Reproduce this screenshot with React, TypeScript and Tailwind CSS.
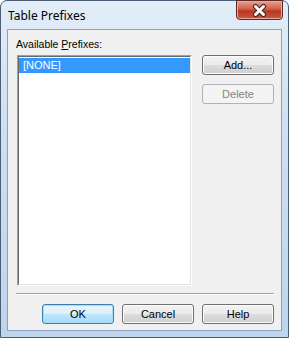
import React from 'react';

const font = { fontFamily: '"Liberation Sans", Arial, sans-serif' };

interface BtnProps {
  label: React.ReactNode;
  primary?: boolean;
  disabled?: boolean;
}

const DialogButton: React.FC<BtnProps> = ({ label, primary, disabled }) => {
  let cls =
    'w-[72px] h-[20px] rounded-[3px] border flex items-center justify-center text-[11px] leading-none ';
  if (disabled) {
    cls += 'border-[#adb2b5] bg-[#f4f4f4] text-[#838383]';
  } else if (primary) {
    cls +=
      'border-[#3c7fb1] bg-[linear-gradient(#eaf6fd_0%,#d9f0fc_50%,#bee6fd_50%,#a7d9f5_100%)] text-black shadow-[inset_0_0_0_1px_#a6dcf7]';
  } else {
    cls +=
      'border-[#707070] bg-[linear-gradient(#f2f2f2_0%,#ebebeb_50%,#dddddd_50%,#cfcfcf_100%)] text-black shadow-[inset_0_0_0_1px_#fcfcfc]';
  }
  return (
    <div className={cls} style={font}>
      {label}
    </div>
  );
};

const CloseGlyph = () => (
  <svg width="15" height="13" viewBox="0 0 15 13">
    <path d="M3.5 2.5 L11.5 10.5 M11.5 2.5 L3.5 10.5" stroke="#4a2020" strokeWidth="5" strokeLinecap="round" />
    <path d="M3.5 2.5 L11.5 10.5 M11.5 2.5 L3.5 10.5" stroke="#ffffff" strokeWidth="3" strokeLinecap="round" />
  </svg>
);

export default function App() {
  return (
    <div className="w-[289px] h-[338px] bg-white">
      <div className="relative w-full h-full flex flex-col border border-[#4c5f77] rounded-t-[7px] bg-[linear-gradient(180deg,#e2edf8_0%,#cddff2_40%,#bfd4ed_100%)] px-[6px] pb-[6px]">
        {/* title bar */}
        <div className="h-[28px] flex items-center pl-[1px] pt-[2px]">
          <span className="text-[12px] text-black" style={{ fontFamily: '"Noto Sans", "Liberation Sans", sans-serif' }}>
            Table Prefixes
          </span>
        </div>
        <div className="absolute top-[-1px] right-[5px] w-[47px] h-[20px] rounded-b-[4px] border border-[#5a2a2a] bg-[linear-gradient(180deg,#e8a090_0%,#d0604a_45%,#b8361f_55%,#c95a40_100%)] flex items-center justify-center shadow-[inset_0_0_0_1px_#eea89a]">
          <CloseGlyph />
        </div>

        {/* client area */}
        <div className="flex-1 flex flex-col border border-[#8aa2be] bg-[#f0f0f0] pt-[8px] pb-[6px]" style={font}>
          <div className="pl-[8px] h-[13px] text-[10.5px] leading-[13px] text-black">
            Available <span className="underline">P</span>refixes:
          </div>
          <div className="flex mt-[4px] pl-[9px]">
            <div className="w-[175px] h-[231px] border border-t-[#a0a0a0] border-l-[#a0a0a0] border-b-white border-r-white">
              <div className="w-full h-full border border-t-[#696969] border-l-[#696969] border-b-[#e3e3e3] border-r-[#e3e3e3] bg-white pt-[1px]">
                <div className="h-[15px] bg-[#3399ff] text-white text-[11px] leading-[15px] pl-[4px] outline-1 outline-dotted outline-offset-[-1px] outline-[#cc6633]">
                  [NONE]
                </div>
              </div>
            </div>
            <div className="ml-[10px] flex flex-col gap-[9px]">
              <DialogButton label="Add..." />
              <DialogButton label="Delete" disabled />
            </div>
          </div>
          <div className="mt-[7px] ml-[8px] mr-[7px] h-[2px] border-t border-t-[#a0a0a0] border-b border-b-white" />
          <div className="mt-[9px] flex justify-end gap-[8px] pr-[7px]">
            <DialogButton label="OK" primary />
            <DialogButton label="Cancel" />
            <DialogButton label="Help" />
          </div>
        </div>
      </div>
    </div>
  );
}
